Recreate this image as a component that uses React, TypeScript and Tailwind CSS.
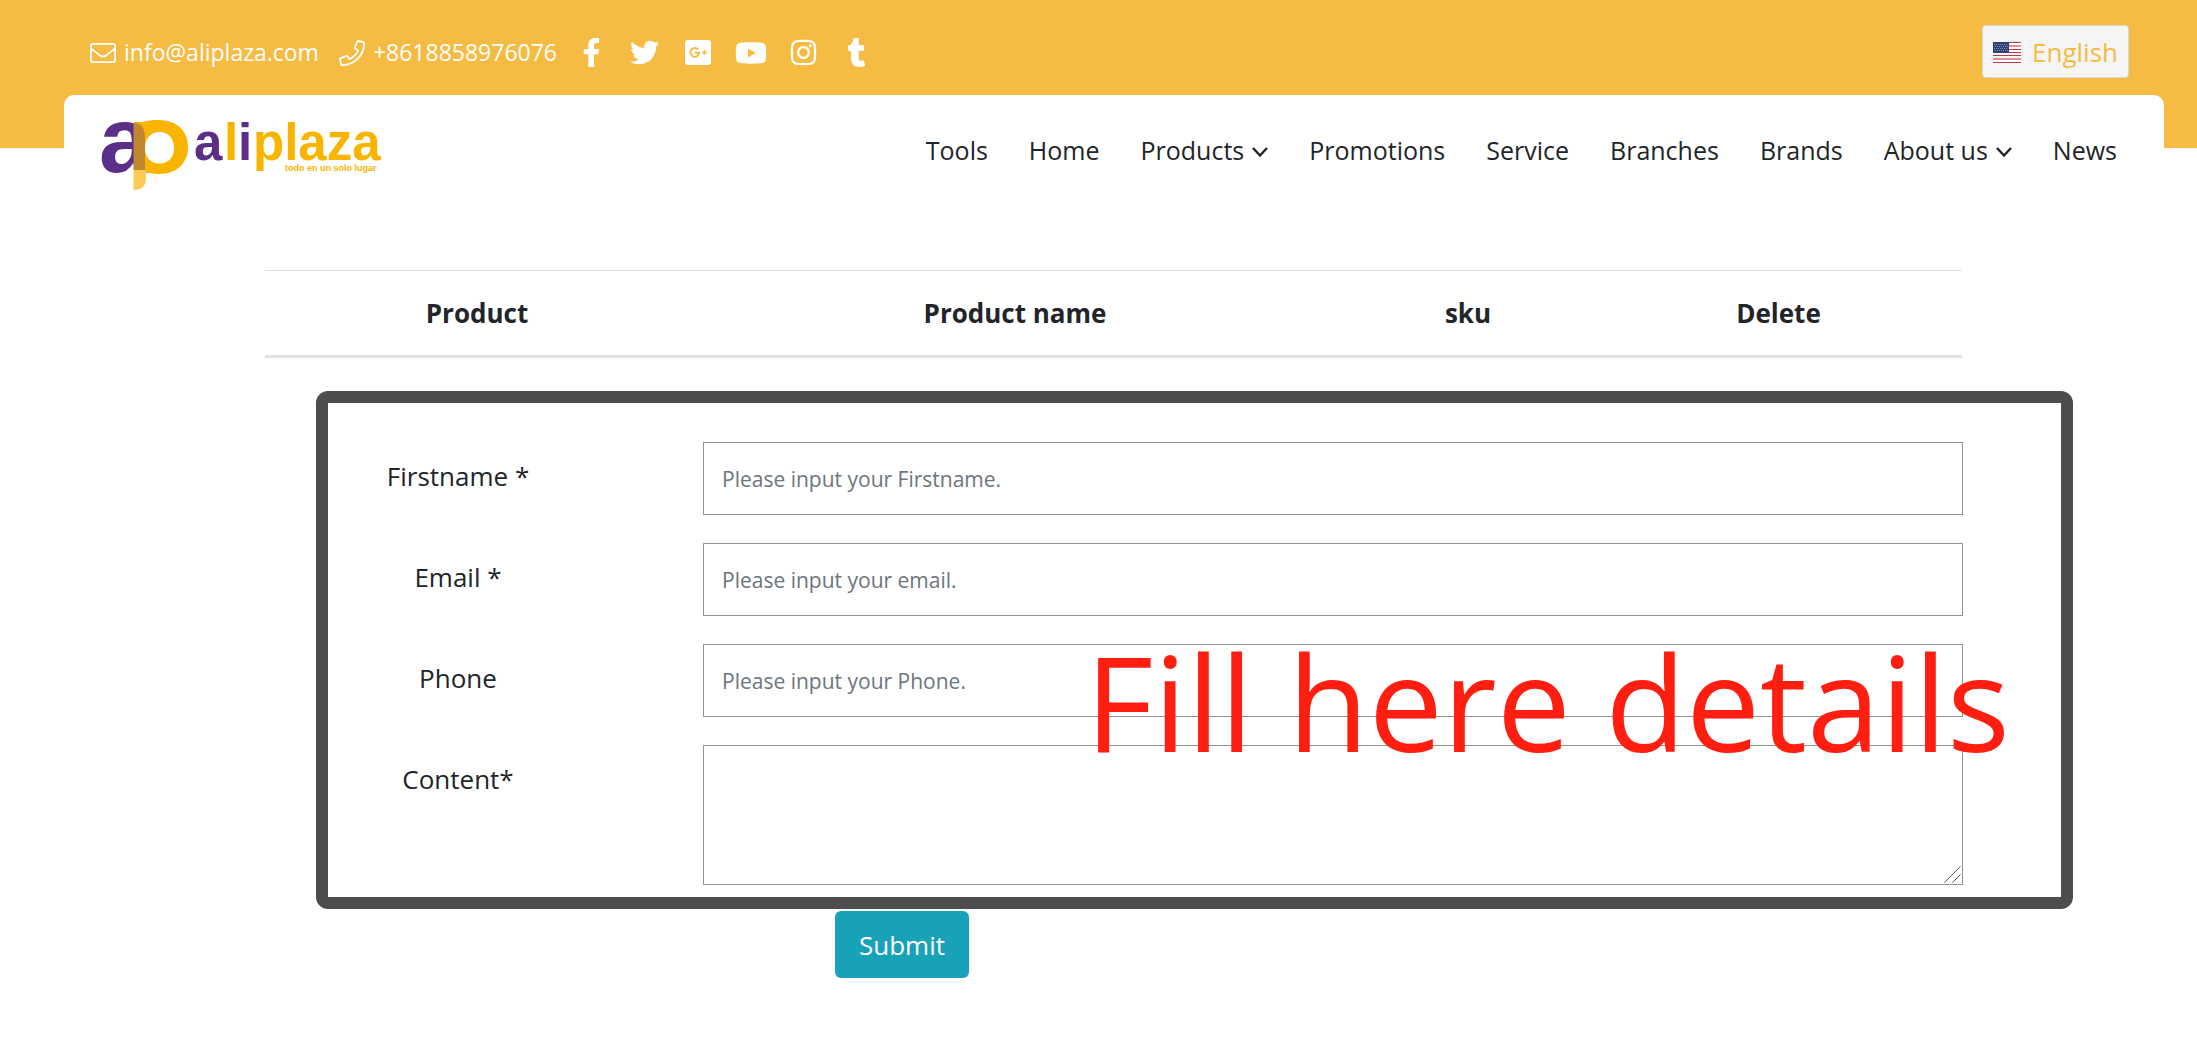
import type { ReactNode } from 'react';
import { FaFacebookF, FaInstagram, FaTumblr, FaTwitter, FaYoutube } from 'react-icons/fa';

interface NavItem {
  label: string;
  hasMenu?: boolean;
}

const navItems: NavItem[] = [
  { label: 'Tools' },
  { label: 'Home' },
  { label: 'Products', hasMenu: true },
  { label: 'Promotions' },
  { label: 'Service' },
  { label: 'Branches' },
  { label: 'Brands' },
  { label: 'About us', hasMenu: true },
  { label: 'News' },
];

const socials = [
  { name: 'Facebook', icon: <FaFacebookF className="w-[29px] h-[29px]" /> },
  { name: 'Twitter', icon: <FaTwitter className="w-[29px] h-[29px]" /> },
  { name: 'Google Plus', icon: <GooglePlus /> },
  { name: 'YouTube', icon: <FaYoutube className="w-8 h-8" /> },
  { name: 'Instagram', icon: <FaInstagram className="w-[29px] h-[29px]" /> },
  { name: 'Tumblr', icon: <FaTumblr className="w-[29px] h-[29px]" /> },
];

function GooglePlus() {
  return (
    <svg viewBox="0 0 26 25" className="w-[26px] h-[25px]">
      <rect width="26" height="25" rx="3" fill="#fff" />
      <path d="M13 9.4A4.4 4.4 0 1 0 14.2 12.7H9.8" fill="none" stroke="#f6bb42" strokeWidth="1.9" />
      <path d="M19.5 10v5M17 12.5h5" stroke="#f6bb42" strokeWidth="1.6" />
    </svg>
  );
}

function EnvelopeIcon() {
  return (
    <svg viewBox="0 0 26 20" className="w-[26px] h-5" fill="none" stroke="#fff" strokeWidth="1.8">
      <rect x="0.9" y="0.9" width="24.2" height="18.2" rx="2" />
      <path d="M1 5.5c3 2.4 6 4.7 8.5 6.7 2.6 2 4.4 2 7 0C19 10.2 22 7.9 25 5.5" />
    </svg>
  );
}

function PhoneIcon() {
  return (
    <svg
      viewBox="0 0 26 26"
      className="w-[26px] h-[26px]"
      fill="none"
      stroke="#fff"
      strokeWidth="1.8"
      strokeLinejoin="round"
    >
      <path d="M19.3 1 24.5 2.2c.4.1.7.4.7.9C25.2 15.3 15.3 25.2 3.1 25.2c-.5 0-.8-.3-.9-.7L1 19.3c-.1-.4.1-.8.5-1l5.6-2.4c.4-.2.8-.1 1.1.2l2.4 3c3.7-1.8 6.7-4.8 8.5-8.5l-3-2.4c-.3-.3-.4-.7-.2-1.1l2.4-5.600c.2-.4.6-.6 1-.5z" />
    </svg>
  );
}

function UsFlag() {
  return (
    <svg viewBox="0 0 28 21" className="w-7 h-[21px]" shapeRendering="crispEdges">
      <rect width="28" height="21" fill="#fff" />
      <path d="M0 .5h28M0 7.5h28M0 10.5h28M0 13.5h28M0 20.5h28" stroke="#bf3a46" strokeWidth="1" />
      <path d="M0 4h28M0 17h28" stroke="#dc9297" strokeWidth="2" />
      <rect width="16" height="11" fill="#2f4172" />
      <path d="M1 2h14M2 4h13M1 6h14M2 8h13" stroke="#8791b0" strokeWidth="1" strokeDasharray="1 1" />
    </svg>
  );
}

function Logo() {
  return (
    <svg viewBox="0 0 290 74" className="w-[290px] h-[74px]" role="img" aria-label="aliplaza">
      <g fontFamily="'Liberation Sans', Arial, sans-serif" fontWeight="700">
        <text x="0" y="53" fontSize="93" fill="#5b2e87">a</text>
        <path
          fillRule="evenodd"
          fill="#f9b400"
          d="M35 3h9c4-1.5 9-2 15-2 19 0 30 11 30 27S78 55 60 55c-6 0-12-1-15-4H35zM60.5 13C51.5 13 46 19.5 46 29s5.5 15.5 14.5 15.5S75 38.5 75 29 69.5 13 60.5 13z"
        />
        <path d="M34.5 4c7 0 11 4 11.5 14v33H34.5z" fill="#c0872f" />
        <path d="M34.5 51H47v8c0 8-4 12-12.5 12z" fill="#fbcb55" />
        <g fontSize="51">
          <text x="95" y="41" fill="#5b2e87">a</text>
          <text x="125" y="41" fill="#f9b400">l</text>
          <text x="139" y="41" fill="#5b2e87">i</text>
          <text x="154" y="41" fill="#f9b400">plaza</text>
        </g>
        <text x="186" y="52" fontSize="9" fill="#f9b400">todo en un solo lugar</text>
      </g>
    </svg>
  );
}

function Chevron() {
  return (
    <svg viewBox="0 0 16 12" className="w-4 h-3 mt-1" fill="none" stroke="#212529" strokeWidth="2.5">
      <path d="M1 2l7 7.5L15 2" />
    </svg>
  );
}

function FormRow({ id, label, children }: { id: string; label: string; children: ReactNode }) {
  return (
    <div className="flex items-start">
      <label htmlFor={id} className="w-[260px] mr-[115px] shrink-0 pt-4 text-center text-[26px] leading-9">
        {label}
      </label>
      {children}
    </div>
  );
}

const fieldClass =
  'block w-full px-[18px] border border-[#929292] bg-white text-[21px] text-[#212529] placeholder:text-[#6c757d]';

export default function App() {
  return (
    <div className="font-['Open_Sans','Noto_Sans',sans-serif] text-[#212529] bg-white">
      <header>
        <div className="bg-[#f6bb42] h-[148px] -mb-[53px]">
          <div className="flex h-[95px] items-center justify-between pl-[90px] pr-[68px] pt-2 text-white">
            <div className="flex items-center pt-0.5 text-[23px]">
              <a href="mailto:info@aliplaza.com" className="flex items-center gap-2">
                <EnvelopeIcon />
                info@aliplaza.com
              </a>
              <a href="tel:+8618858976076" className="flex items-center gap-2 ml-5">
                <PhoneIcon />
                +8618858976076
              </a>
              <div className="flex items-center ml-2">
                {socials.map((social) => (
                  <a key={social.name} href="#" aria-label={social.name} className="flex w-[53px] justify-center">
                    {social.icon}
                  </a>
                ))}
              </div>
            </div>
            <button className="flex items-center gap-[11px] h-[53px] px-[10px] pt-0.5 rounded border border-[#d8d8d8] bg-[#f5f5f5] text-[26px] text-[#f6bb42]">
              <UsFlag />
              English
            </button>
          </div>
        </div>

        <div className="flex items-start justify-between ml-[64px] mr-[33px] pl-[35px] pr-[47px] pt-6 pb-[77px] rounded-t-[10px] bg-white">
          <Logo />
          <nav className="flex gap-[41px] pt-[13px] text-[25px] leading-9">
            {navItems.map((item) => (
              <a key={item.label} href="#" className="flex items-center gap-2 whitespace-nowrap">
                {item.label}
                {item.hasMenu && <Chevron />}
              </a>
            ))}
          </nav>
        </div>
      </header>

      <main>
        <div className="ml-[265px] mr-[235px]">
          <table className="w-full table-fixed border-t border-b-3 border-[#dee2e6] text-[26px]">
            <thead>
              <tr className="h-[86px]">
                <th className="w-[424px] pt-px font-bold">Product</th>
                <th className="w-[652px] pt-px font-bold">Product name</th>
                <th className="w-[254px] pt-px font-bold">sku</th>
                <th className="pt-px font-bold">Delete</th>
              </tr>
            </thead>
          </table>
        </div>

        <form className="ml-[316px] mr-[124px] mt-[33px]" onSubmit={(e) => e.preventDefault()}>
          <div className="relative flex flex-col gap-7 rounded-[12px] border-12 border-[#4d4d4d] pt-[39px] pr-[98px] pb-3">
            <FormRow id="firstname" label="Firstname *">
              <input id="firstname" type="text" className={`${fieldClass} h-[73px]`} placeholder="Please input your Firstname." />
            </FormRow>
            <FormRow id="email" label="Email *">
              <input id="email" type="email" className={`${fieldClass} h-[73px]`} placeholder="Please input your email." />
            </FormRow>
            <FormRow id="phone" label="Phone">
              <input id="phone" type="tel" className={`${fieldClass} h-[73px]`} placeholder="Please input your Phone." />
            </FormRow>
            <FormRow id="content" label="Content*">
              <div className="relative w-full">
                <textarea id="content" className={`${fieldClass} h-[140px] py-4 resize-none`} />
                <svg viewBox="0 0 17 17" className="absolute right-[2px] bottom-[2px] w-[17px] h-[17px]" stroke="#555">
                  <path d="M.5 16.5l16-16M8.5 16.5l8-8" />
                </svg>
              </div>
            </FormRow>
            <p className="absolute right-[51px] top-[208px] text-[132px] leading-[180px] whitespace-nowrap text-[#ff1e10] pointer-events-none">
              Fill here details
            </p>
          </div>
          <button
            type="submit"
            className="block ml-[519px] mt-0.5 h-[67px] px-6 pt-0.5 rounded-md bg-[#18a2b8] text-[26px] text-white"
          >
            Submit
          </button>
        </form>
      </main>
    </div>
  );
}
